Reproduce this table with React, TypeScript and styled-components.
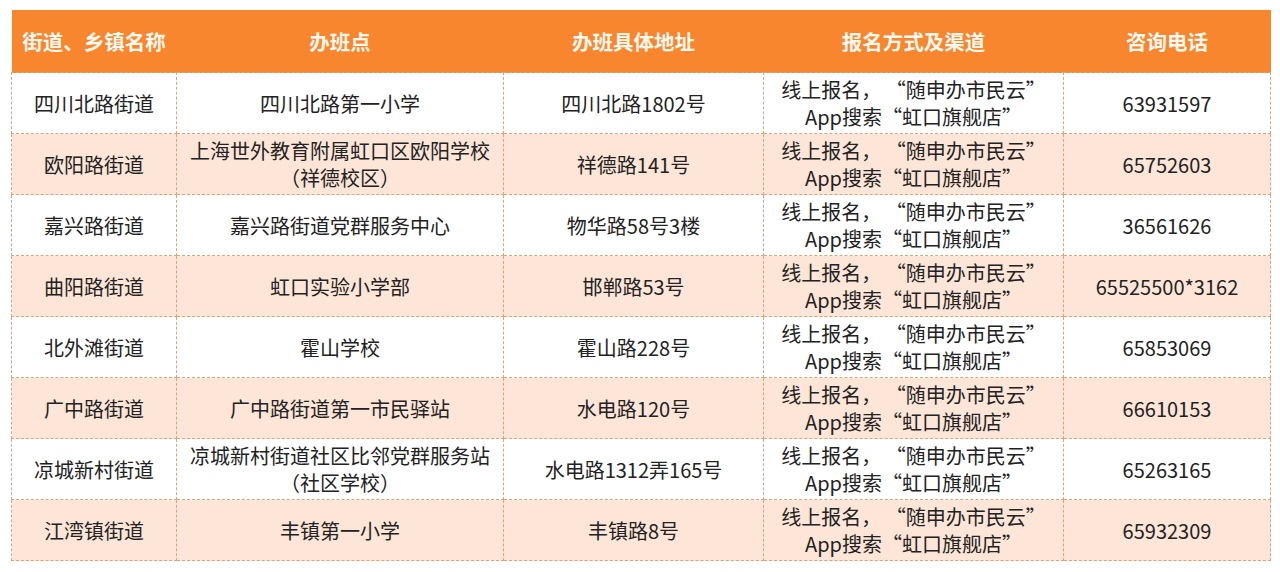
import React from 'react'
import styled, { createGlobalStyle } from 'styled-components'

const GlobalStyle = createGlobalStyle`
  html, body {
    margin: 0;
    padding: 0;
    background: #ffffff;
  }
  body {
    font-family: "Noto Sans CJK SC", "Noto Sans", sans-serif;
  }
`

const Page = styled.div`
  padding: 10px 10px 0 11px;
`

const Table = styled.table`
  width: 1259px;
  border-collapse: collapse;
  table-layout: fixed;
`

const HeadCell = styled.th`
  background: #f7862e;
  color: #fff8ef;
  font-size: 20.5px;
  font-weight: 700;
  height: 62px;
  padding: 0;
  text-align: center;
  vertical-align: middle;
  text-spacing-trim: space-all;
`

const Row = styled.tr<{ $alt: boolean }>`
  background: ${props => (props.$alt ? '#fde6d8' : '#ffffff')};
`

const Cell = styled.td`
  border: 1px dashed #d9a57c;
  height: 60px;
  padding: 0 2px;
  text-align: center;
  vertical-align: middle;
  font-size: 20px;
  line-height: 27px;
  color: #222222;
  text-spacing-trim: space-all;
`

const Line = styled.div`
  white-space: nowrap;
`

interface Entry {
  street: string
  site: string[]
  address: string
  phone: string
}

const channel = ['线上报名， “随申办市民云”', 'App搜索“虹口旗舰店”']

const entries: Entry[] = [
  { street: '四川北路街道', site: ['四川北路第一小学'], address: '四川北路1802号', phone: '63931597' },
  { street: '欧阳路街道', site: ['上海世外教育附属虹口区欧阳学校', '（祥德校区）'], address: '祥德路141号', phone: '65752603' },
  { street: '嘉兴路街道', site: ['嘉兴路街道党群服务中心'], address: '物华路58号3楼', phone: '36561626' },
  { street: '曲阳路街道', site: ['虹口实验小学部'], address: '邯郸路53号', phone: '65525500*3162' },
  { street: '北外滩街道', site: ['霍山学校'], address: '霍山路228号', phone: '65853069' },
  { street: '广中路街道', site: ['广中路街道第一市民驿站'], address: '水电路120号', phone: '66610153' },
  { street: '凉城新村街道', site: ['凉城新村街道社区比邻党群服务站', '（社区学校）'], address: '水电路1312弄165号', phone: '65263165' },
  { street: '江湾镇街道', site: ['丰镇第一小学'], address: '丰镇路8号', phone: '65932309' },
]

const widths = [165, 327, 260, 300, 207]
const headers = ['街道、乡镇名称', '办班点', '办班具体地址', '报名方式及渠道', '咨询电话']

export default function App() {
  return (
    <>
      <GlobalStyle />
      <Page>
        <Table>
          <colgroup>
            {widths.map((w, i) => <col key={i} style={{ width: w }} />)}
          </colgroup>
          <thead>
            <tr>
              {headers.map(h => <HeadCell key={h}>{h}</HeadCell>)}
            </tr>
          </thead>
          <tbody>
            {entries.map((e, i) => (
              <Row key={e.street} $alt={i % 2 === 1}>
                <Cell>{e.street}</Cell>
                <Cell>{e.site.map(s => <Line key={s}>{s}</Line>)}</Cell>
                <Cell>{e.address}</Cell>
                <Cell>{channel.map(c => <Line key={c}>{c}</Line>)}</Cell>
                <Cell>{e.phone}</Cell>
              </Row>
            ))}
          </tbody>
        </Table>
      </Page>
    </>
  )
}
